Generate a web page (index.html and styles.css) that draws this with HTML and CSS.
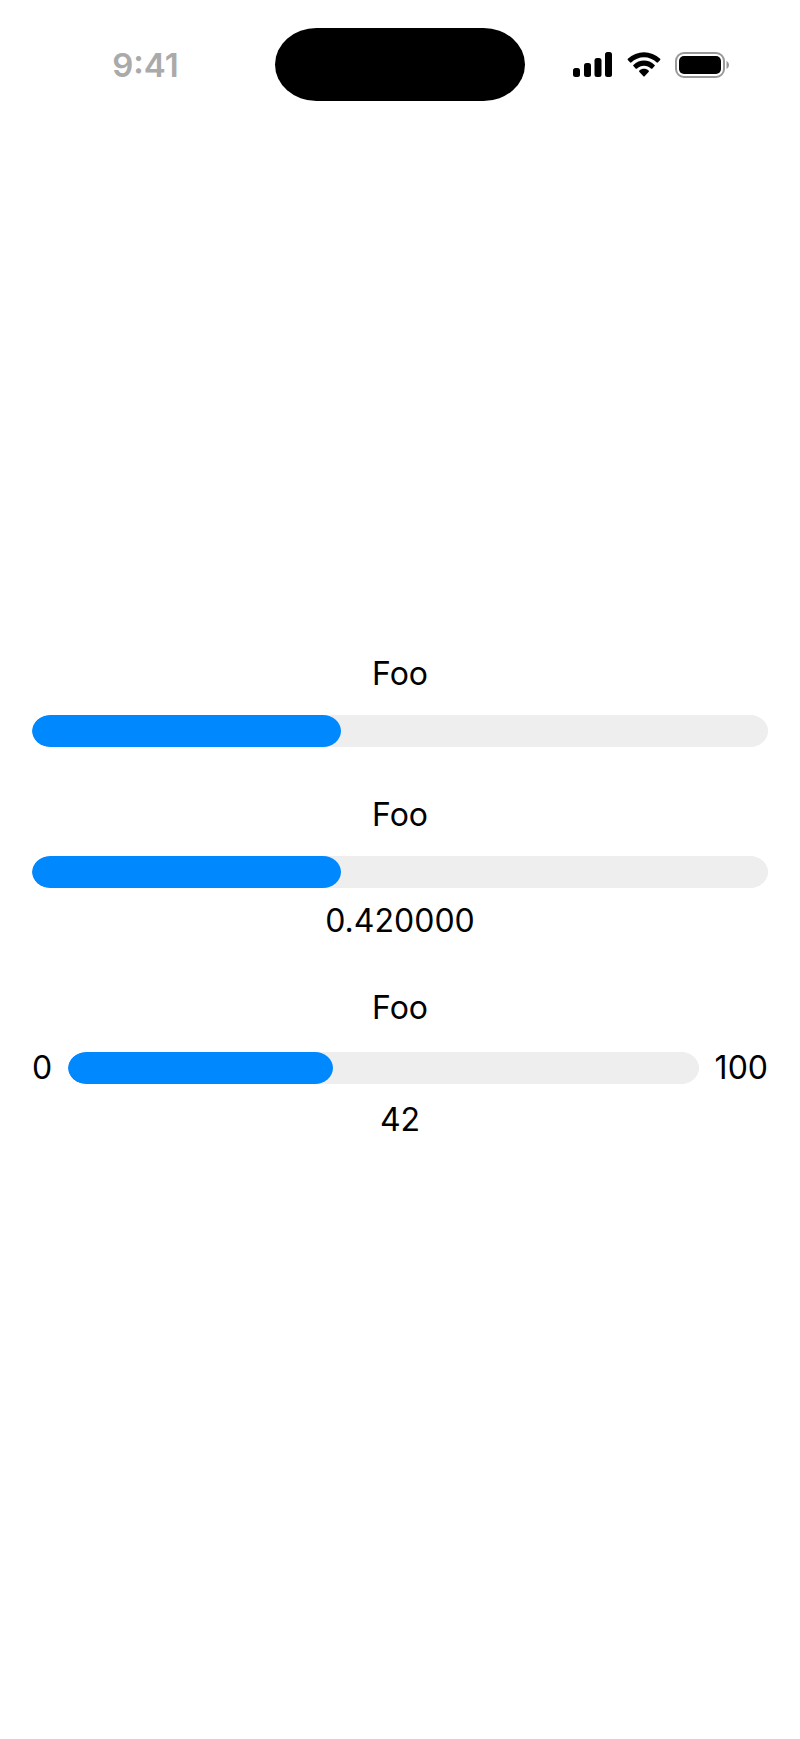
FILE: index.html
```
<!DOCTYPE html>
<html lang="en">
<head>
    <meta charset="UTF-8">
    <meta name="viewport" content="width=device-width, initial-scale=1.0">
    <title>Gauges</title>
    <link rel="stylesheet" href="styles.css">
</head>
<body>
    <header class="status-bar">
        <time class="clock">9:41</time>
        <div class="island"></div>
        <div class="status-icons">
            <svg width="40" height="26" viewBox="0 0 40 26">
                <rect x="0" y="16" width="7" height="9" rx="2.500"/>
                <rect x="11" y="11" width="7" height="14" rx="2.500"/>
                <rect x="21.500" y="6" width="7" height="19" rx="2.500"/>
                <rect x="32" y="0" width="7" height="25" rx="2.500"/>
            </svg>
            <svg width="34" height="26" viewBox="0 0 17 12.5" preserveAspectRatio="none">
                <path d="M8.5 2.5c2.4 0 4.7.9 6.4 2.6.1.1.3.1.5 0l1.2-1.3c.1-.1.1-.4 0-.5C12.100-.9 4.900-.9.400 3.300c-.1.1-.1.4 0 .5l1.200 1.300c.2.1.4.1.5 0 1.700-1.700 4-2.600 6.400-2.600z"/>
                <path d="M8.500 6.600c1.300 0 2.600.5 3.600 1.400.1.1.3.1.5 0l1.200-1.300c.2-.1.2-.4 0-.5-3-2.800-7.600-2.800-10.600 0-.2.1-.2.4 0 .5l1.200 1.300c.2.1.4.1.5 0 1-.9 2.300-1.400 3.600-1.400z"/>
                <path d="M10.900 9.500c.1-.1.1-.4 0-.5-1.400-1.200-3.400-1.200-4.800 0-.1.1-.1.4 0 .5l2.100 2.200c.2.2.4.2.6 0z"/>
            </svg>
            <svg width="54" height="26" viewBox="0 0 54 26">
                <rect class="battery-case" x="1" y="1" width="48" height="24" rx="8"/>
                <rect x="4" y="4" width="42" height="18" rx="5"/>
                <path class="battery-cap" d="M51.500 9c3.300 1.500 3.300 6.500 0 8z"/>
            </svg>
        </div>
    </header>
    <main class="content">
        <div class="gauge">
            <label for="gauge1">Foo</label>
            <progress id="gauge1" max="100" value="42"></progress>
        </div>
        <div class="gauge">
            <label for="gauge2">Foo</label>
            <progress id="gauge2" max="100" value="42"></progress>
            <output for="gauge2">0.420000</output>
        </div>
        <div class="gauge">
            <label for="gauge3">Foo</label>
            <div class="gauge-row">
                <span>0</span>
                <progress id="gauge3" max="100" value="42"></progress>
                <span>100</span>
            </div>
            <output for="gauge3">42</output>
        </div>
    </main>
</body>
</html>
```
FILE: styles.css
```
* {
    box-sizing: border-box;
}
body {
    font-family: Inter, sans-serif;
    font-size: 32px;
    line-height: 38px;
    background-color: #fff;
    color: #000;
    margin: 0;
    min-height: 100vh;
    display: flex;
    flex-direction: column;
}
.status-bar {
    display: grid;
    grid-template-columns: 1fr 250px 1fr;
    align-items: center;
    padding: 28px 0 0;
}
.clock {
    color: #aaa;
    font-size: 33px;
    font-weight: 600;
    text-align: center;
    padding-left: 16px;
}
.island {
    height: 73px;
    border-radius: 42px / 37px;
    background-color: #000;
}
.status-icons {
    display: flex;
    justify-content: center;
    gap: 14px;
    padding-right: 24px;
}
.battery-case {
    fill: none;
    stroke: #999;
    stroke-width: 2;
}
.battery-cap {
    fill: #999;
}
.content {
    flex: 1;
    display: flex;
    flex-direction: column;
    justify-content: center;
    gap: 49px;
    padding: 0 32px 46px;
}
.gauge {
    display: flex;
    flex-direction: column;
    text-align: center;
}
.gauge label {
    margin-bottom: 22px;
}
.gauge output {
    margin-top: 14px;
}
.gauge-row {
    display: flex;
    align-items: center;
    gap: 16px;
}
progress {
    appearance: none;
    display: block;
    width: 100%;
    height: 32px;
    border: none;
    border-radius: 18px / 16px;
    background-color: #eee;
    overflow: hidden;
}
progress::-webkit-progress-bar {
    background-color: #eee;
    border-radius: 18px / 16px;
}
progress::-webkit-progress-value {
    background-color: #08f;
    border-radius: 18px / 16px;
}
```
